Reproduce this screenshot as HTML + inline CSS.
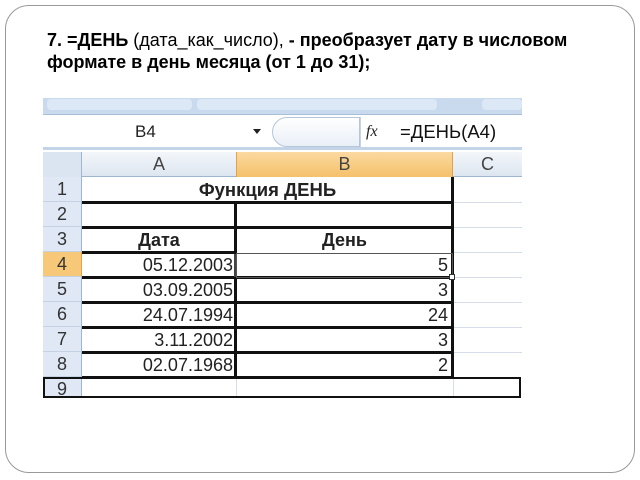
<!DOCTYPE html>
<html><head><meta charset="utf-8"><style>
*{margin:0;padding:0;box-sizing:border-box}
body{width:640px;height:480px;background:#fff;position:relative;overflow:hidden;font-family:"Liberation Sans","DejaVu Sans",sans-serif}
.frame{position:absolute;left:5px;top:5px;width:630px;height:468px;border:1px solid #999;border-radius:24px}
.title{position:absolute;left:47px;top:29px;font-size:18px;line-height:22px;color:#000;font-weight:bold;white-space:nowrap}
.title span{font-weight:normal}
.a{position:absolute}
.rh{position:absolute;left:43px;width:39px;background:#dfe8f4;color:#333;font-size:18px;text-align:center;border-bottom:1px solid #c5d2e3;border-right:1px solid #9eb6ce}
.cell{position:absolute;font-size:18px;color:#222;line-height:25px;white-space:nowrap}
.gl{position:absolute;background:#d6dde8}
.bk{position:absolute;background:#111}
</style></head><body>
<div class="frame"></div>
<div class="title">7. =ДЕНЬ <span>(дата_как_число),</span> - преобразует дату в числовом<br>формате в день месяца (от 1 до 31);</div>

<!-- ribbon -->
<div class="a" style="left:43px;top:98px;width:479px;height:16px;background:#c9d9ee"></div>
<div class="a" style="left:47px;top:99px;width:145px;height:11px;background:#dde8f6;border-radius:4px"></div>
<div class="a" style="left:197px;top:99px;width:240px;height:11px;background:#dde8f6;border-radius:4px"></div>
<div class="a" style="left:482px;top:99px;width:40px;height:11px;background:#dde8f6;border-radius:4px"></div>
<!-- formula bar -->
<div class="a" style="left:43px;top:114px;width:479px;height:36px;background:#fff;border-top:1px solid #a9bfd6;border-bottom:3px solid #c4d4e8"></div>
<div class="cell" style="left:135px;top:119px;font-size:17px">B4</div>
<div class="a" style="left:253px;top:129px;width:0;height:0;border-left:4px solid transparent;border-right:4px solid transparent;border-top:5px solid #222"></div>
<div class="a" style="left:272px;top:117px;width:88px;height:30px;border:1px solid #b6c6d8;border-radius:15px 0 0 15px;background:linear-gradient(#fff,#e9eff7)"></div>
<div class="a" style="left:360px;top:117px;width:33px;height:30px;border-left:1px solid #c8d4e2;background:#fff"></div>
<div class="cell" style="left:366px;top:119px;font-style:italic;font-family:'Liberation Serif',serif;font-size:16px">fx</div>
<div class="cell" style="left:400px;top:119px;font-size:18.5px;color:#111">=ДЕНЬ(А4)</div>

<!-- column headers -->
<div class="a" style="left:43px;top:152px;width:479px;height:25px;background:linear-gradient(#f3f6fa,#dde6f0);border-bottom:1px solid #9eb6ce"></div>
<div class="a" style="left:43px;top:152px;width:39px;height:25px;background:#dbe5f1;border-right:1px solid #9eb6ce"></div>
<div class="a" style="left:236px;top:152px;width:217px;height:25px;background:linear-gradient(#fbd9a0,#f5c16a);border-left:1px solid #e3a14a;border-right:1px solid #e3a14a"></div>
<div class="cell" style="left:82px;top:152px;width:154px;text-align:center;color:#444">A</div>
<div class="cell" style="left:236px;top:152px;width:217px;text-align:center;color:#444">B</div>
<div class="cell" style="left:453px;top:152px;width:69px;text-align:center;color:#444">C</div>

<!-- row headers -->
<div class="rh" style="top:177px;height:25px;line-height:25px">1</div>
<div class="rh" style="top:202px;height:25px;line-height:25px">2</div>
<div class="rh" style="top:227px;height:25px;line-height:25px">3</div>
<div class="rh" style="top:252px;height:25px;line-height:25px;background:#f7c878;border-right-color:#e3a14a">4</div>
<div class="rh" style="top:277px;height:25px;line-height:25px">5</div>
<div class="rh" style="top:302px;height:25px;line-height:25px">6</div>
<div class="rh" style="top:327px;height:25px;line-height:25px">7</div>
<div class="rh" style="top:352px;height:25px;line-height:25px">8</div>
<div class="rh" style="top:377px;height:21px;line-height:25px;overflow:hidden">9</div>

<!-- grid lines -->
<div class="gl" style="left:82px;top:202px;width:440px;height:1px"></div>
<div class="gl" style="left:453px;top:227px;width:69px;height:1px"></div>
<div class="gl" style="left:453px;top:252px;width:69px;height:1px"></div>
<div class="gl" style="left:453px;top:277px;width:69px;height:1px"></div>
<div class="gl" style="left:453px;top:302px;width:69px;height:1px"></div>
<div class="gl" style="left:453px;top:327px;width:69px;height:1px"></div>
<div class="gl" style="left:453px;top:352px;width:69px;height:1px"></div>
<div class="gl" style="left:236px;top:377px;width:1px;height:21px"></div>
<div class="gl" style="left:453px;top:377px;width:1px;height:21px"></div>

<!-- thick borders -->
<div class="bk" style="left:82px;top:201px;width:372px;height:3px"></div>
<div class="bk" style="left:82px;top:226px;width:372px;height:3px"></div>
<div class="bk" style="left:82px;top:251px;width:155px;height:3px"></div>
<div class="bk" style="left:82px;top:276px;width:372px;height:3px"></div>
<div class="bk" style="left:82px;top:301px;width:372px;height:3px"></div>
<div class="bk" style="left:82px;top:326px;width:372px;height:3px"></div>
<div class="bk" style="left:82px;top:351px;width:372px;height:3px"></div>
<div class="bk" style="left:82px;top:376px;width:372px;height:3px"></div>
<div class="bk" style="left:451px;top:177px;width:3px;height:201px"></div>
<div class="bk" style="left:234px;top:202px;width:3px;height:50px"></div>
<div class="bk" style="left:234px;top:277px;width:3px;height:101px"></div>
<!-- active cell B4 -->
<div class="a" style="left:236px;top:253px;width:217px;height:25px;border:1px solid #555"></div>
<div class="a" style="left:449px;top:274px;width:6px;height:6px;background:#fff;border:1px solid #333"></div>
<div class="a" style="left:234px;top:254px;width:2px;height:23px;background:#444"></div>
<!-- row 9 box -->
<div class="a" style="left:43px;top:377px;width:478px;height:21px;border:2px solid #111"></div>

<!-- text -->
<div class="cell" style="left:82px;top:177px;width:371px;text-align:center;font-weight:bold;font-size:18.5px">Функция ДЕНЬ</div>
<div class="cell" style="left:82px;top:228px;width:154px;text-align:center;font-weight:bold">Дата</div>
<div class="cell" style="left:236px;top:228px;width:217px;text-align:center;font-weight:bold">День</div>
<div class="cell" style="left:82px;top:253px;width:151px;text-align:right">05.12.2003</div>
<div class="cell" style="left:82px;top:278px;width:151px;text-align:right">03.09.2005</div>
<div class="cell" style="left:82px;top:303px;width:151px;text-align:right">24.07.1994</div>
<div class="cell" style="left:82px;top:328px;width:151px;text-align:right">3.11.2002</div>
<div class="cell" style="left:82px;top:353px;width:151px;text-align:right">02.07.1968</div>
<div class="cell" style="left:236px;top:253px;width:212px;text-align:right">5</div>
<div class="cell" style="left:236px;top:278px;width:212px;text-align:right">3</div>
<div class="cell" style="left:236px;top:303px;width:212px;text-align:right">24</div>
<div class="cell" style="left:236px;top:328px;width:212px;text-align:right">3</div>
<div class="cell" style="left:236px;top:353px;width:212px;text-align:right">2</div>
</body></html>
